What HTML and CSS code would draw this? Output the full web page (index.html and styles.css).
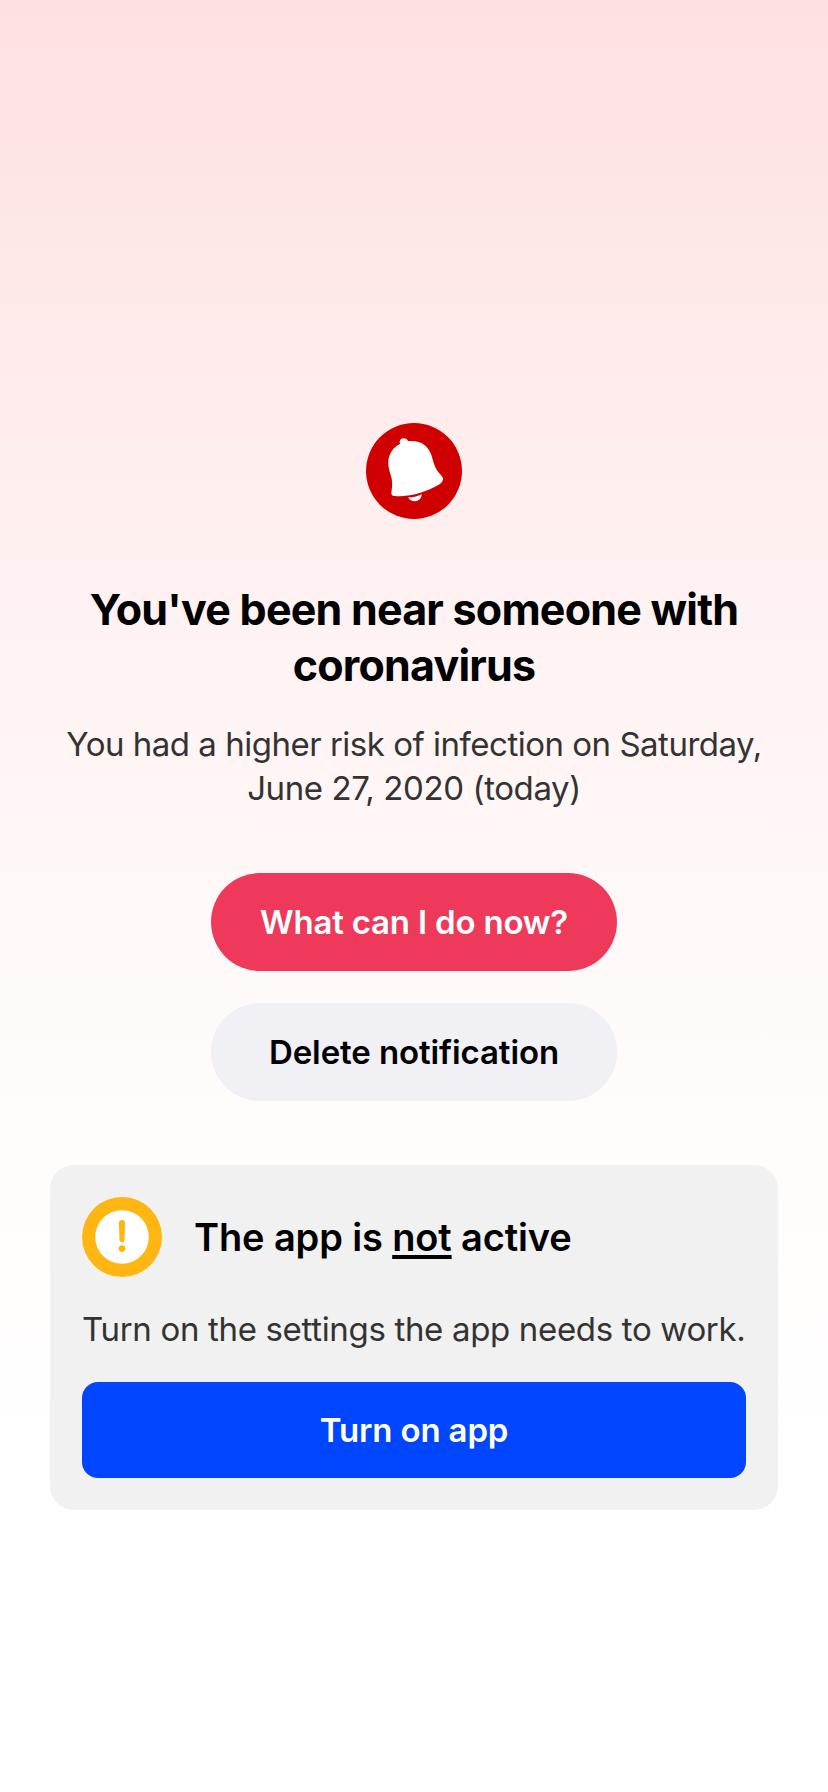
FILE: index.html
```html
<!DOCTYPE html>
<html lang="en">
<head>
<meta charset="utf-8">
<title>Exposure notification</title>
<link rel="stylesheet" href="styles.css">
</head>
<body>
<main class="screen">
  <svg class="bell" viewBox="0 0 96 96" aria-hidden="true">
    <circle cx="48" cy="48" r="48" fill="#d00000"/>
    <path fill="#fff" d="M34 21C33 17.300 35 15.200 37.800 15.200C40 15.200 41.500 16.300 42 18.200C55 17 62.500 23 65.700 33C68 41 69 45.500 74 51C77.300 54.500 77.600 55.500 76.500 58C75 61 72 62.300 67 64.800C54 71 41 74 29 73C25.800 72.700 25.100 71.800 25.500 68.500C26.300 63 26.700 57.500 24.700 52C22 44 21.500 37 23.700 32C26 26.500 29.500 23 34 21Z"/>
    <path fill="#fff" d="M42.200 74.300C47 74.600 51.500 73.300 55.700 71.200C55.700 75.200 52.500 78.200 49 78.200C46 78.200 43.200 76.800 42.200 74.300Z"/>
  </svg>
  <h1 class="title">You've been near someone with<br>coronavirus</h1>
  <p class="message"><span class="message-first">You had a higher risk of infection on Saturday,</span><br>June 27, 2020 (today)</p>
  <div class="actions">
    <button class="pill pill-primary">What can I do now?</button>
    <button class="pill pill-secondary">Delete notification</button>
  </div>
  <section class="card">
    <div class="card-head">
      <svg class="warning" viewBox="0 0 80 80" aria-hidden="true">
        <circle cx="40" cy="40" r="40" fill="#ffb612"/>
        <circle cx="40" cy="40" r="26.800" fill="#fff"/>
        <path fill="#ffb612" d="M36.900 26.200a3.100 3.100 0 0 1 6.200 0L42.500 43a2.500 2.300 0 0 1-5 0Z"/>
        <circle cx="40" cy="51.600" r="3.400" fill="#ffb612"/>
      </svg>
      <h2 class="card-title">The app is <span class="underlined">not</span> active</h2>
    </div>
    <p class="card-text">Turn on the settings the app needs to work.</p>
    <button class="turn-on">Turn on app</button>
  </section>
</main>
</body>
</html>
```
FILE: styles.css
```css
* { box-sizing: border-box; }
body {
  margin: 0;
  font-family: Inter, "Liberation Sans", sans-serif;
  font-feature-settings: "calt" 0;
}
h1, h2, p { margin: 0; white-space: nowrap; }
button { border: 0; padding: 0; font: inherit; }
.screen {
  height: 1792px;
  display: flex;
  flex-direction: column;
  align-items: center;
  padding: 423px 50px 0;
  background: linear-gradient(#ffe0e2 0, #fee6e6 200px, #ffeded 420px, #fff3f3 660px, #fff9f9 950px, #fffdfc 1180px, #fff 1500px);
}
.bell { width: 96px; height: 96px; flex: none; }
.title {
  margin-top: 62px;
  font-size: 43px;
  line-height: 56px;
  font-weight: 700;
  text-align: center;
  color: #000;
  letter-spacing: -0.78px;
}
.message {
  margin-top: 29px;
  font-size: 33px;
  line-height: 44px;
  text-align: center;
  color: #333;
  letter-spacing: -0.4px;
}
.message-first { letter-spacing: -0.49px; }
.actions {
  margin-top: 63px;
  display: flex;
  flex-direction: column;
  gap: 32px;
}
.pill {
  width: 406px;
  height: 98px;
  border-radius: 49px;
  font-size: 33px;
  font-weight: 600;
}
.pill-primary { background: #ee395b; color: #fff; letter-spacing: -0.2px; }
.pill-secondary { background: #f0f0f5; color: #000; letter-spacing: -0.1px; }
.card {
  width: 728px;
  height: 345px;
  margin-top: 64px;
  padding: 32px;
  border-radius: 24px;
  background: #f1f1f1;
}
.card-head { display: flex; align-items: center; gap: 32px; }
.warning { width: 80px; height: 80px; flex: none; }
.card-title {
  font-size: 38px;
  line-height: 52px;
  font-weight: 600;
  letter-spacing: -0.13px;
}
.underlined {
  text-decoration: underline;
  text-decoration-thickness: 4px;
  text-underline-offset: 4px;
  text-decoration-skip-ink: none;
}
.card-text {
  margin-top: 30px;
  font-size: 33px;
  line-height: 44px;
  color: #333;
  letter-spacing: -0.33px;
}
.turn-on {
  display: block;
  width: 100%;
  height: 96px;
  margin-top: 31px;
  border-radius: 16px;
  background: #0046ff;
  color: #fff;
  font-size: 33px;
  font-weight: 600;
  letter-spacing: -0.15px;
}
```
